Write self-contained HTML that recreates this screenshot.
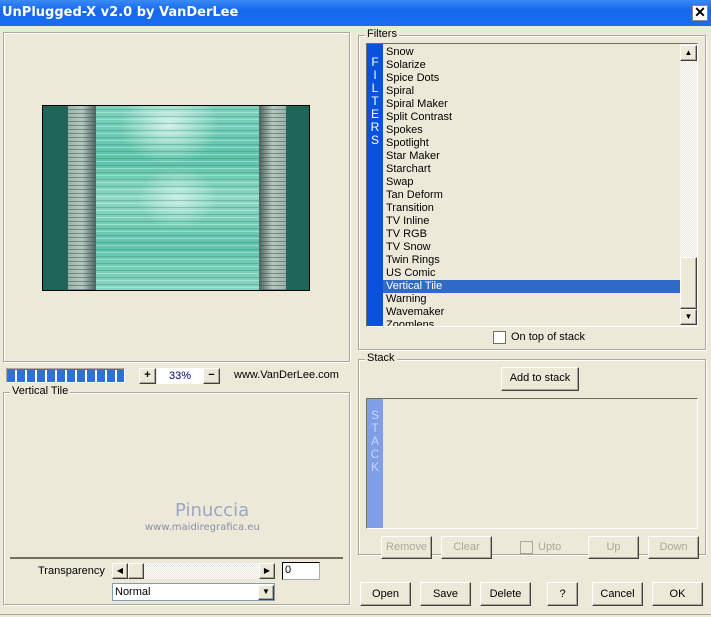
<!DOCTYPE html>
<html><head><style>
*{margin:0;padding:0;box-sizing:border-box}
body{width:711px;height:617px;background:#ECE9D8;font-family:"Liberation Sans",sans-serif;font-size:11px;color:#000;position:relative;overflow:hidden}
.a{position:absolute}
.grp{position:absolute;border:1px solid #aca899;box-shadow:inset 1px 1px 0 #fff,1px 1px 0 #fff}
.lbl{position:absolute;background:#ECE9D8;padding:0 2px;font-size:11px}
.btn{position:absolute;background:#ECE9D8;border:1px solid;border-color:#fff #404040 #404040 #fff;box-shadow:inset -1px -1px 0 #aca899;text-align:center;font-size:11px;line-height:20px}
.dis{color:#aca899}
.sunk{position:absolute;border:1px solid;border-color:#aca899 #fff #fff #aca899;box-shadow:inset 1px 1px 0 #716f64}
.item{height:13px;line-height:13px;padding-left:3px;font-size:11px;white-space:nowrap}
</style></head><body>
<div class="a" style="left:0;top:0;width:711px;height:26px;background:linear-gradient(#3a8af7,#1668ec 40%,#1a6cf0)"></div>
<div class="a" style="left:2px;top:5px;color:#fff;font-weight:bold;font-size:13px;font-family:'DejaVu Sans',sans-serif">UnPlugged-X v2.0 by VanDerLee</div>
<div class="a" style="left:692px;top:5px;width:16px;height:16px;background:#fff;border:1px solid #888;font-weight:bold;font-size:14px;line-height:13px;text-align:center">✕</div>

<div class="grp" style="left:3px;top:32px;width:347px;height:330px"></div>
<div class="a" style="left:42px;top:105px;width:268px;height:186px;border:1px solid #000;background:#1e6659">
 <div class="a" style="left:25px;top:0;width:28px;height:184px;background:linear-gradient(90deg,#9ab3a8,#b5c9bf 50%,#4e6460);"></div>
 <div class="a" style="left:25px;top:0;width:28px;height:184px;background:repeating-linear-gradient(#0000 0 3px,rgba(60,80,75,.5) 3px 4px)"></div>
 <div class="a" style="left:53px;top:0;width:163px;height:184px;background:radial-gradient(ellipse 40px 30px at 50% 50%,#c8ede2,transparent),radial-gradient(ellipse 50px 40px at 45% 10%,#d0f0e6,transparent),linear-gradient(#7fd2bd,#5cc3a8 30%,#8fd8c4 50%,#5fc4aa 75%,#88d5c0)"></div>
 <div class="a" style="left:53px;top:0;width:163px;height:184px;background:repeating-linear-gradient(#0000 0 3px,rgba(40,130,110,.35) 3px 4px,#0000 4px 6px,rgba(230,250,245,.4) 6px 7px)"></div>
 <div class="a" style="left:216px;top:0;width:27px;height:184px;background:linear-gradient(90deg,#4e6460,#b5c9bf 50%,#9ab3a8)"></div>
 <div class="a" style="left:216px;top:0;width:27px;height:184px;background:repeating-linear-gradient(#0000 0 3px,rgba(60,80,75,.5) 3px 4px)"></div>
</div>

<div class="sunk" style="left:6px;top:368px;width:119px;height:15px;background:repeating-linear-gradient(90deg,#2e6fd8 0 8px,#fff 8px 10px);border-color:#aca899 #fff #fff #aca899"></div>
<div class="btn" style="left:139px;top:368px;width:17px;height:16px;line-height:13px;font-weight:bold">+</div>
<div class="a" style="left:157px;top:368px;width:46px;height:16px;background:#fff;color:#000080;text-align:center;line-height:16px">33%</div>
<div class="btn" style="left:203px;top:368px;width:17px;height:16px;line-height:13px;font-weight:bold">−</div>
<div class="a" style="left:234px;top:369px">www.VanDerLee.com</div>

<div class="grp" style="left:3px;top:392px;width:347px;height:213px"></div>
<div class="lbl" style="left:10px;top:385px">Vertical Tile</div>
<div class="a" style="left:175px;top:500px;color:#a0a4c4;font-size:18px;font-family:'DejaVu Sans',sans-serif">Pinuccia</div>
<div class="a" style="left:145px;top:522px;color:#8a8ea8;font-size:10px;font-family:'DejaVu Sans',sans-serif">www.maidiregrafica.eu</div>
<div class="a" style="left:10px;top:557px;width:333px;height:2px;background:#716f64"></div>
<div class="a" style="left:38px;top:565px">Transparency</div>
<div class="a" style="left:112px;top:563px;width:163px;height:16px;background:repeating-conic-gradient(#e8e6dc 0 25%,#fff 0 50%) 0 0/2px 2px"></div>
<div class="btn" style="left:112px;top:563px;width:16px;height:16px;line-height:13px;font-size:8px">◀</div>
<div class="btn" style="left:128px;top:563px;width:16px;height:16px"></div>
<div class="btn" style="left:259px;top:563px;width:16px;height:16px;line-height:13px;font-size:8px">▶</div>
<div class="a" style="left:282px;top:562px;width:38px;height:18px;background:#fff;border:1px solid #000;border-right-color:#aaa;border-bottom-color:#aaa;padding-left:2px;line-height:15px">0</div>
<div class="a" style="left:112px;top:583px;width:163px;height:18px;background:#fff;border:1px solid #7f9db9;line-height:16px;padding-left:2px">Normal</div>
<div class="btn" style="left:258px;top:585px;width:16px;height:15px;line-height:12px;font-size:8px">▼</div>

<div class="grp" style="left:358px;top:35px;width:348px;height:315px"></div>
<div class="lbl" style="left:365px;top:28px">Filters</div>
<div class="a" style="left:366px;top:43px;width:332px;height:284px;background:#ECE9D8;border:1px solid;border-color:#716f64 #fff #fff #716f64;overflow:hidden">
 <div class="a" style="left:0;top:0;width:16px;height:284px;background:#0a52de;color:#fff;font-size:12px;text-align:center;line-height:13px;padding-top:12px">F<br>I<br>L<br>T<br>E<br>R<br>S</div>
 <div class="a" style="left:16px;top:2px;width:298px">
  <div class="item">Snow</div><div class="item">Solarize</div><div class="item">Spice Dots</div><div class="item">Spiral</div><div class="item">Spiral Maker</div><div class="item">Split Contrast</div><div class="item">Spokes</div><div class="item">Spotlight</div><div class="item">Star Maker</div><div class="item">Starchart</div><div class="item">Swap</div><div class="item">Tan Deform</div><div class="item">Transition</div><div class="item">TV Inline</div><div class="item">TV RGB</div><div class="item">TV Snow</div><div class="item">Twin Rings</div><div class="item">US Comic</div><div class="item" style="background:#316ac5;color:#fff">Vertical Tile</div><div class="item">Warning</div><div class="item">Wavemaker</div><div class="item">Zoomlens</div>
 </div>
 <div class="a" style="left:313px;top:0;width:17px;height:282px;background:repeating-conic-gradient(#e8e6dc 0 25%,#fff 0 50%) 0 0/2px 2px"></div>
 <div class="btn" style="left:313px;top:1px;width:17px;height:16px;line-height:13px;font-size:8px">▲</div>
 <div class="btn" style="left:313px;top:213px;width:17px;height:52px"></div>
 <div class="btn" style="left:313px;top:265px;width:17px;height:16px;line-height:13px;font-size:8px">▼</div>
</div>
<div class="a" style="left:493px;top:331px;width:13px;height:13px;background:#fff;border:1px solid #716f64"></div>
<div class="a" style="left:511px;top:331px">On top of stack</div>

<div class="grp" style="left:358px;top:359px;width:348px;height:196px"></div>
<div class="lbl" style="left:365px;top:352px">Stack</div>
<div class="btn" style="left:501px;top:367px;width:78px;height:24px;line-height:21px">Add to stack</div>
<div class="a" style="left:366px;top:398px;width:332px;height:131px;border:1px solid;border-color:#716f64 #fff #fff #716f64">
 <div class="a" style="left:0;top:0;width:16px;height:129px;background:#7f9ee6;color:#c8d6f6;font-size:12px;text-align:center;line-height:13px;padding-top:10px">S<br>T<br>A<br>C<br>K</div>
</div>
<div class="btn dis" style="left:381px;top:536px;width:51px;height:23px">Remove</div>
<div class="btn dis" style="left:441px;top:536px;width:51px;height:23px">Clear</div>
<div class="a" style="left:520px;top:541px;width:13px;height:13px;border:1px solid #aca899"></div>
<div class="a dis" style="left:538px;top:541px">Upto</div>
<div class="btn dis" style="left:588px;top:536px;width:51px;height:23px">Up</div>
<div class="btn dis" style="left:648px;top:536px;width:51px;height:23px">Down</div>

<div class="btn" style="left:360px;top:582px;width:51px;height:24px;line-height:22px">Open</div>
<div class="btn" style="left:420px;top:582px;width:51px;height:24px;line-height:22px">Save</div>
<div class="btn" style="left:480px;top:582px;width:51px;height:24px;line-height:22px">Delete</div>
<div class="btn" style="left:547px;top:582px;width:31px;height:24px;line-height:22px">?</div>
<div class="btn" style="left:592px;top:582px;width:51px;height:24px;line-height:22px">Cancel</div>
<div class="btn" style="left:652px;top:582px;width:51px;height:24px;line-height:22px">OK</div>
<div class="a" style="left:0;top:614px;width:711px;height:1px;background:#aca899"></div>
</body></html>
